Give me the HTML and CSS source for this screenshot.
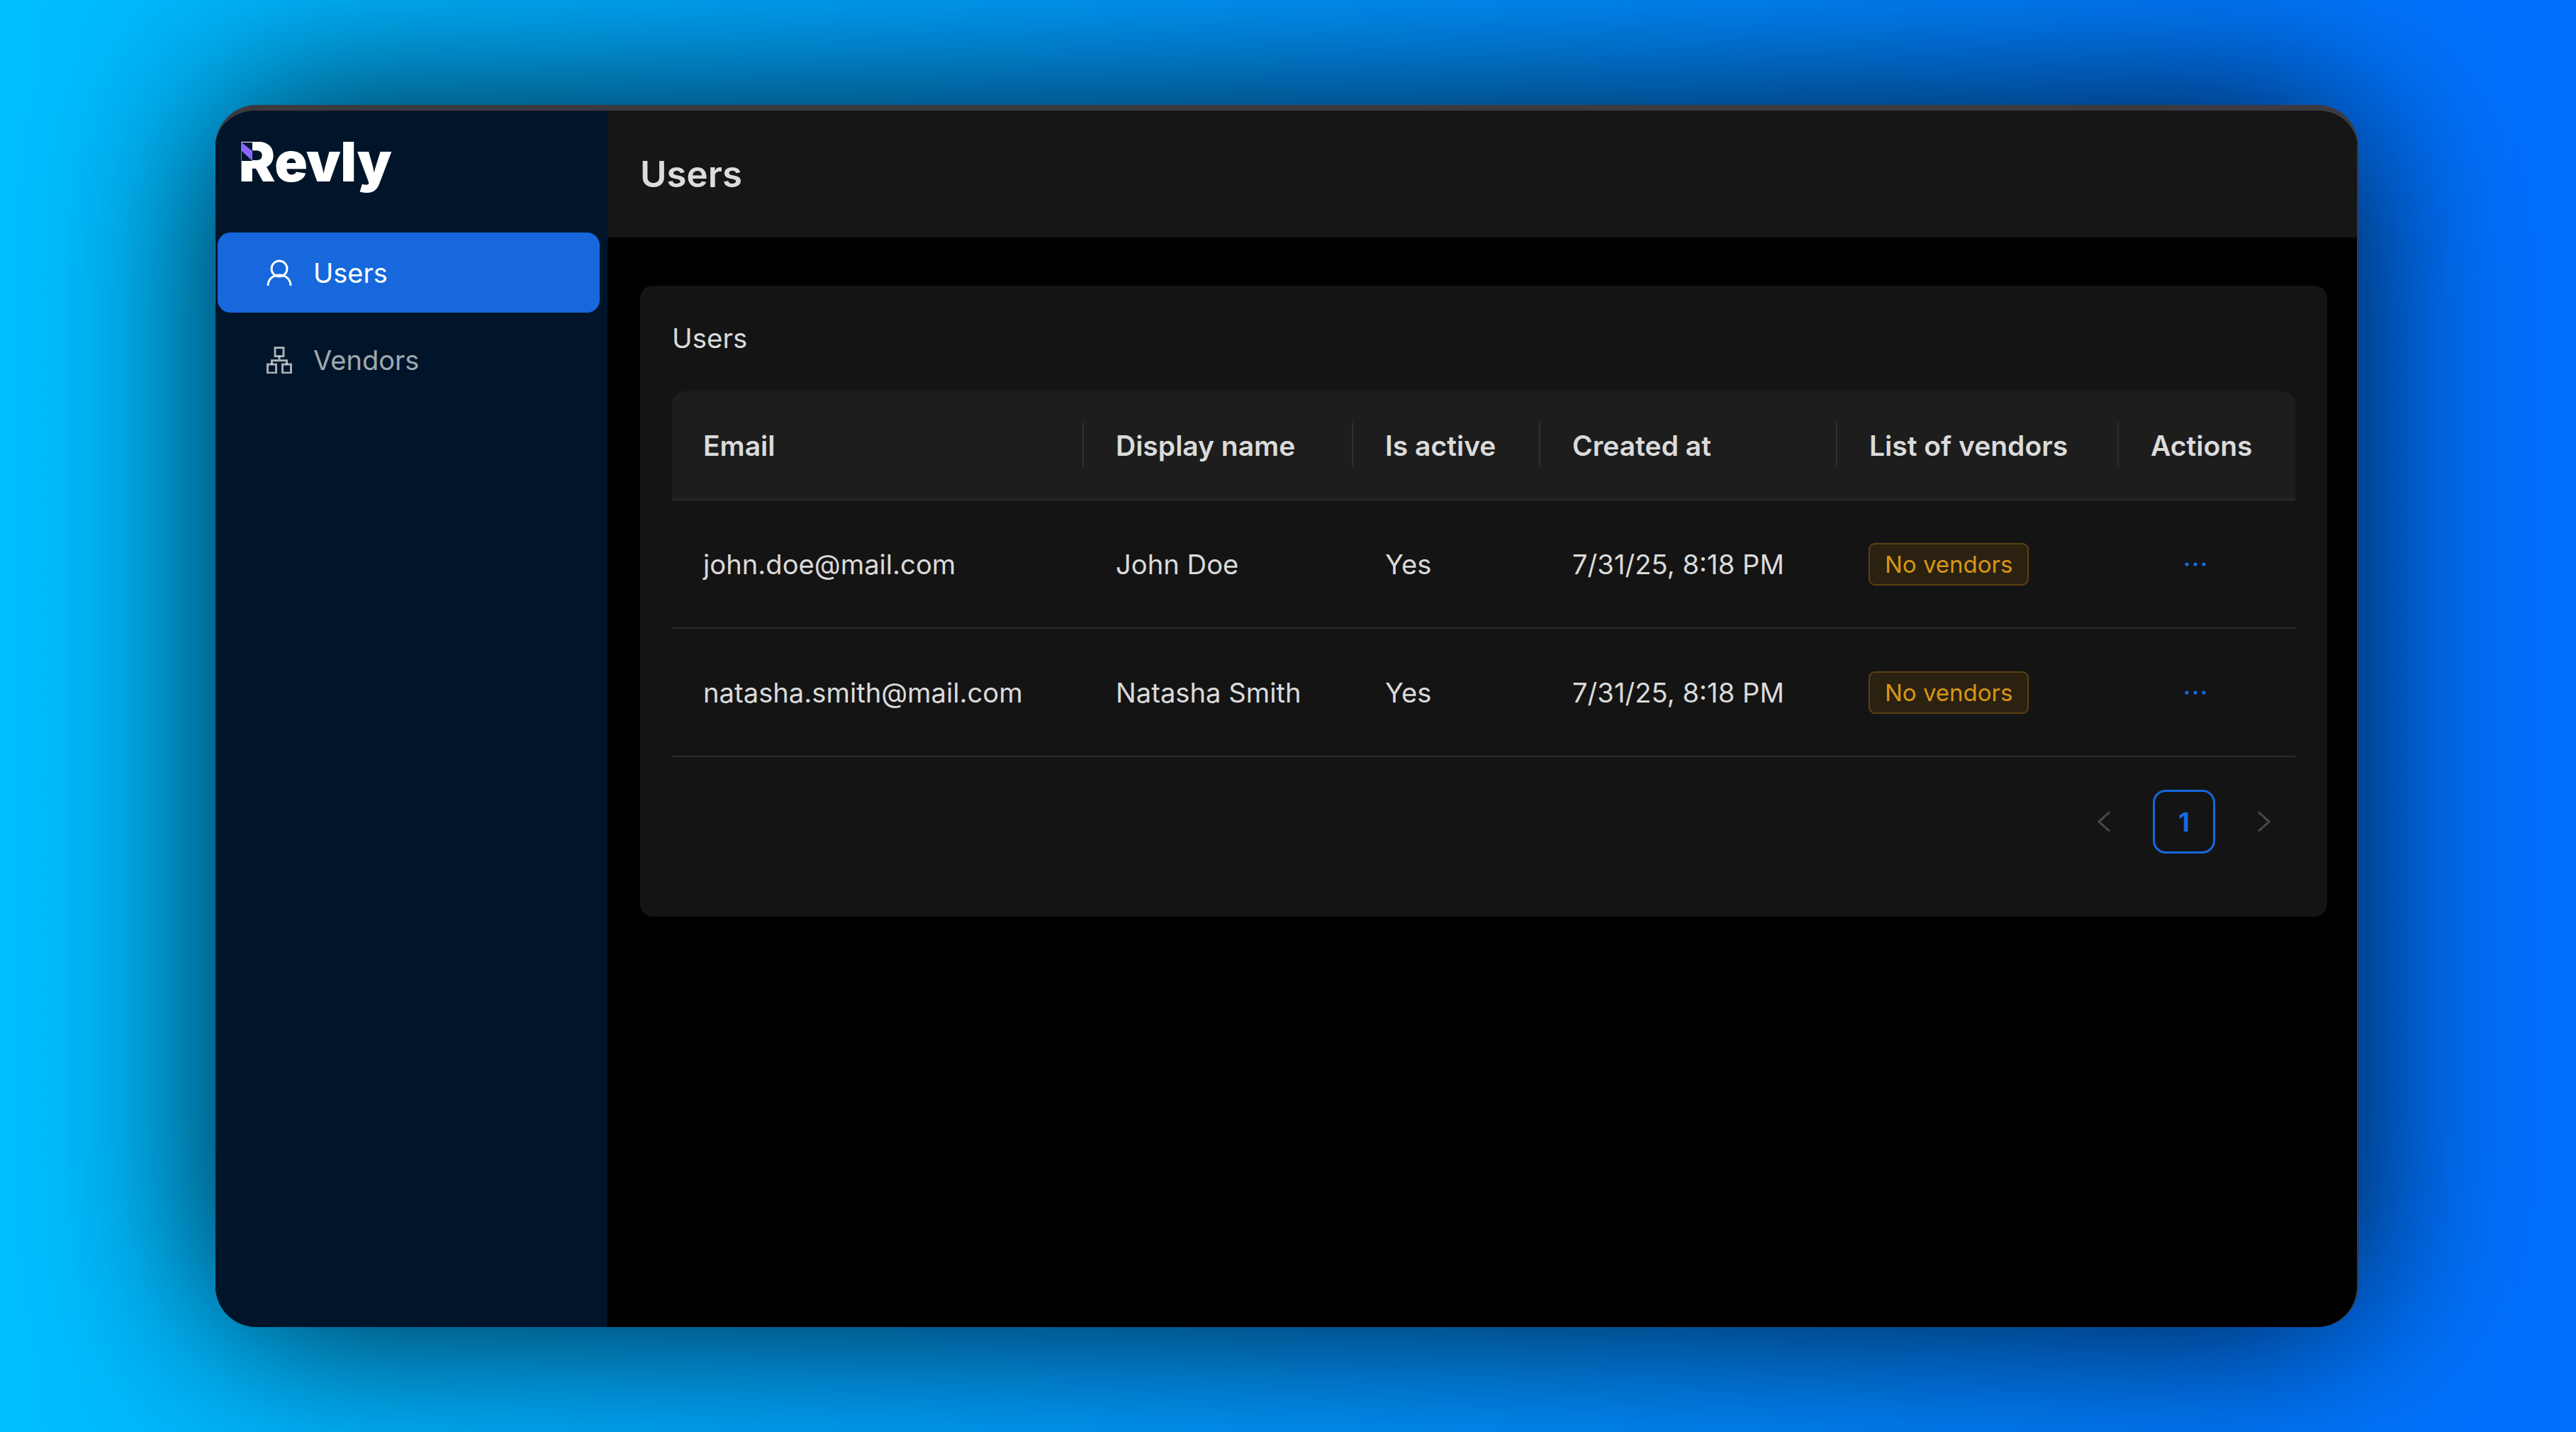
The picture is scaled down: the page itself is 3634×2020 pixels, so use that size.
FILE: index.html
```html
<!DOCTYPE html>
<html lang="en">

<head>
	<meta charset="UTF-8">
	<title>Revly - Users</title>
	<link rel="stylesheet" href="styles.css">
</head>

<body>
	<div class="window">
		<aside class="sidebar">
			<div class="logo">
				<span class="logo-text">Revly</span>
				<svg class="logo-mark" viewBox="0 0 15 26">
					<polygon class="logo-cut" points="0,0 15,0 15,26 0,26"/>
					<polygon class="logo-tip" points="0,0 15,12 15,26 0,12"/>
				</svg>
			</div>
			<nav class="nav">
				<a class="nav-item active">
					<svg class="nav-icon" viewBox="0 0 36 38">
						<circle cx="18" cy="13" r="11"/>
						<path d="M2 37c0-9 7-15 16-15s16 6 16 15"/>
					</svg>
					<span>Users</span>
				</a>
				<a class="nav-item">
					<svg class="nav-icon" viewBox="0 0 36 38">
						<rect x="12" y="1.500" width="12" height="12"/>
						<rect x="1.500" y="25" width="12" height="12"/>
						<rect x="22.500" y="25" width="12" height="12"/>
						<path d="M18 13.500v6M7.500 25v-5.500h21V25"/>
					</svg>
					<span>Vendors</span>
				</a>
			</nav>
		</aside>

		<main class="main">
			<header class="topbar">
				<h1>Users</h1>
			</header>
			<div class="content">
				<section class="card">
					<h2>Users</h2>
					<table class="table">
						<thead>
							<tr>
								<th class="col-email">Email</th>
								<th class="col-name">Display name</th>
								<th class="col-active">Is active</th>
								<th class="col-created">Created at</th>
								<th class="col-vendors">List of vendors</th>
								<th class="col-actions">Actions</th>
							</tr>
						</thead>
						<tbody>
							<tr>
								<td>john.doe@mail.com</td>
								<td>John Doe</td>
								<td>Yes</td>
								<td>7/31/25, 8:18 PM</td>
								<td><span class="tag">No vendors</span></td>
								<td>
									<svg class="dots" viewBox="0 0 30 6"><circle cx="3" cy="3" r="2.600"/><circle cx="15" cy="3" r="2.600"/><circle cx="27" cy="3" r="2.600"/></svg>
								</td>
							</tr>
							<tr>
								<td>natasha.smith@mail.com</td>
								<td>Natasha Smith</td>
								<td>Yes</td>
								<td>7/31/25, 8:18 PM</td>
								<td><span class="tag">No vendors</span></td>
								<td>
									<svg class="dots" viewBox="0 0 30 6"><circle cx="3" cy="3" r="2.600"/><circle cx="15" cy="3" r="2.600"/><circle cx="27" cy="3" r="2.600"/></svg>
								</td>
							</tr>
						</tbody>
					</table>
					<div class="pagination">
						<span class="page-arrow">
							<svg viewBox="0 0 18 30"><path d="M17 1.500 2 15l15 13.500"/></svg>
						</span>
						<span class="page-current">1</span>
						<span class="page-arrow">
							<svg viewBox="0 0 18 30"><path d="M1 1.500 16 15 1 28.500"/></svg>
						</span>
					</div>
				</section>
			</div>
		</main>
	</div>
</body>

</html>
```

FILE: styles.css
```css
* {
	box-sizing: border-box;
}

html,
body {
	height: 100%;
}

body {
	margin: 0;
	padding: 148px 307px 148px 304px;
	font-family: Inter, "Noto Sans", sans-serif;
	background: linear-gradient(90deg, #00bfff, #006fff);
}

.window {
	display: flex;
	height: 100%;
	border-top: 8px solid #3c3a41;
	border-right: 2px solid #3c3a41;
	border-radius: 58px;
	background: #000;
	box-shadow: 0 0 260px rgba(0, 0, 0, 0.85);
	overflow: hidden;
}

.sidebar {
	width: 553px;
	flex-shrink: 0;
	background: #001529;
}

.logo {
	position: relative;
	height: 172px;
	padding: 26px 0 0 33px;
}

.logo-text {
	font-size: 77px;
	font-weight: 900;
	line-height: 92px;
	letter-spacing: -0.5px;
	color: #fff;
}

.logo-mark {
	position: absolute;
	left: 37px;
	top: 45px;
	width: 15px;
	height: 26px;
}

.logo-cut {
	fill: #001529;
}

.logo-tip {
	fill: #8b66ff;
}

.nav {
	display: flex;
	flex-direction: column;
	gap: 10px;
	padding: 0 11px 0 3px;
}

.nav-item {
	display: flex;
	align-items: center;
	gap: 30px;
	height: 113px;
	padding-left: 69px;
	border-radius: 18px;
	font-size: 38px;
	color: rgba(255, 255, 255, 0.65);
}

.nav-item.active {
	background: #1668dc;
	color: #fff;
}

.nav-icon {
	width: 36px;
	height: 38px;
	fill: none;
	stroke: currentColor;
	stroke-width: 3;
}

.main {
	flex: 1;
	min-width: 0;
}

.topbar {
	display: flex;
	align-items: center;
	height: 179px;
	padding-left: 46px;
	background: #161616;
}

h1 {
	margin: 0;
	font-size: 51px;
	font-weight: 600;
	color: rgba(255, 255, 255, 0.85);
}

.content {
	padding: 68px 42px 0 46px;
}

.card {
	padding: 45px 45px 89px;
	border-radius: 18px;
	background: #141414;
}

h2 {
	margin: 0 0 46px;
	font-size: 38.500px;
	font-weight: 400;
	line-height: 58px;
	color: rgba(255, 255, 255, 0.85);
}

.table {
	width: 100%;
	table-layout: fixed;
	border-collapse: separate;
	border-spacing: 0;
	font-size: 38.200px;
	color: rgba(255, 255, 255, 0.85);
}

.col-email { width: 580px; }
.col-name { width: 380px; }
.col-active { width: 264px; }
.col-created { width: 419px; }
.col-vendors { width: 397px; }
.col-actions { width: 250px; }

th {
	position: relative;
	height: 154px;
	padding: 0 46px;
	background: #1d1d1d;
	border-bottom: 2px solid #2c2c2c;
	font-size: 39px;
	font-weight: 600;
	text-align: left;
	white-space: nowrap;
}

th:first-child,
td:first-child {
	padding-left: 44px;
}

th:first-child {
	border-top-left-radius: 18px;
}

th:last-child {
	border-top-right-radius: 18px;
}

th:not(:first-child)::before {
	content: "";
	position: absolute;
	left: -1px;
	top: 44px;
	width: 2px;
	height: 62px;
	background: #303030;
}

td {
	height: 181px;
	padding: 0 46px;
	border-bottom: 2px solid #2c2c2c;
	white-space: nowrap;
}

.tag {
	display: inline-block;
	height: 60px;
	margin-left: -1px;
	padding: 0 21px;
	border: 2px solid #594214;
	border-radius: 9px;
	background: #2b2111;
	font-size: 33px;
	line-height: 56px;
	color: #d89614;
}

.dots {
	display: block;
	width: 30px;
	height: 6px;
	margin-left: 48px;
	fill: #1668dc;
}

.pagination {
	display: flex;
	justify-content: flex-end;
	gap: 25px;
	margin-top: 46px;
}

.page-arrow,
.page-current {
	display: flex;
	align-items: center;
	justify-content: center;
	width: 88px;
	height: 90px;
}

.page-arrow svg {
	width: 18px;
	height: 30px;
	fill: none;
	stroke: #4a4a4a;
	stroke-width: 3;
}

.page-current {
	border: 3px solid #1668dc;
	border-radius: 18px;
	font-size: 37px;
	font-weight: 700;
	color: #1668dc;
}
```
